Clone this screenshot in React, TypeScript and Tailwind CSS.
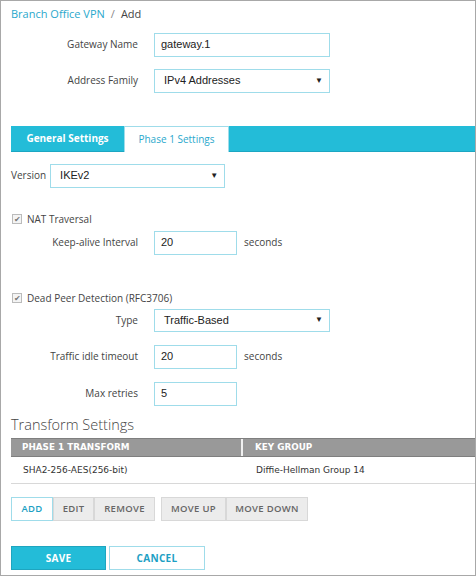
import React from 'react';

const cyan = '#23bcd8';

function Caret() {
  return <span className="text-[8px] text-[#222]">▼</span>;
}

function Field({ label, children }: { label: string; children: React.ReactNode }) {
  return (
    <div className="flex items-center">
      <div className="w-[127px] pr-0 text-right text-[10px] text-[#444]">{label}</div>
      <div className="ml-[16px] flex items-center">{children}</div>
    </div>
  );
}

function TextBox({ value, w }: { value: string; w: string }) {
  return (
    <div className={`${w} h-[24px] border border-[#9fdcea] px-[6px] flex items-center text-[11px] text-[#222] font-['Liberation_Sans',sans-serif]`}>
      {value}
    </div>
  );
}

function SelectBox({ value, w, h = 'h-[24px]' }: { value: string; w: string; h?: string }) {
  return (
    <div className={`${w} ${h} border border-[#9fdcea] pl-[9px] pr-[6px] flex items-center justify-between text-[11px] text-[#222] font-['Liberation_Sans',sans-serif]`}>
      <span>{value}</span>
      <Caret />
    </div>
  );
}

function Check({ label }: { label: string }) {
  return (
    <div className="flex items-center gap-[5px] text-[10px] text-[#444]">
      <span className="w-[10px] h-[10px] border border-[#bbb] bg-[#f4f4f4] flex items-center justify-center text-[8px] leading-none text-[#777]">✔</span>
      <span>{label}</span>
    </div>
  );
}

export default function App() {
  return (
    <div className="w-[476px] h-[576px] border border-[#a8a8a8] bg-white font-['Open_Sans',sans-serif] overflow-hidden">
      {/* Breadcrumb */}
      <div className="pl-[10px] pt-[5px] text-[11px]">
        <span className="text-[#2aa8cc]">Branch Office VPN</span>
        <span className="text-[#888] mx-[6px]">/</span>
        <span className="text-[#444]">Add</span>
      </div>

      <div className="mt-[10px] flex flex-col gap-[12px] pl-[10px]">
        <Field label="Gateway Name">
          <TextBox value="gateway.1" w="w-[176px]" />
        </Field>
        <Field label="Address Family">
          <SelectBox value="IPv4 Addresses" w="w-[176px]" />
        </Field>
      </div>

      {/* Tabs */}
      <div className="mt-[33px] ml-[10px] h-[26px] bg-[#23bcd8] flex items-stretch border-b border-[#1ca6c2]">
        <div className="w-[113px] flex items-center justify-center text-[10px] font-bold text-white">General Settings</div>
        <div className="w-[105px] -mb-[1px] bg-white border-t border-l border-r border-[#9fdcea] flex items-center justify-center text-[10px] text-[#2aa8cc]">Phase 1 Settings</div>
      </div>

      <div className="mt-[12px] pl-[10px] flex items-center gap-[4px]">
        <span className="text-[10px] text-[#444]">Version</span>
        <SelectBox value="IKEv2" w="w-[175px]" />
      </div>

      <div className="mt-[24px] pl-[11px]">
        <Check label="NAT Traversal" />
      </div>
      <div className="mt-[4px] pl-[10px]">
        <Field label="Keep-alive Interval">
          <TextBox value="20" w="w-[83px]" />
          <span className="ml-[7px] text-[10px] text-[#444]">seconds</span>
        </Field>
      </div>

      <div className="mt-[36px] pl-[11px]">
        <Check label="Dead Peer Detection (RFC3706)" />
      </div>
      <div className="mt-[3px] pl-[10px] flex flex-col gap-[13px]">
        <Field label="Type">
          <SelectBox value="Traffic-Based" w="w-[176px]" h="h-[23px]" />
        </Field>
        <Field label="Traffic idle timeout">
          <TextBox value="20" w="w-[83px]" />
          <span className="ml-[7px] text-[10px] text-[#444]">seconds</span>
        </Field>
        <Field label="Max retries">
          <TextBox value="5" w="w-[83px]" />
        </Field>
      </div>

      {/* Transform settings */}
      <div className="mt-[8px] pl-[10px] text-[14.5px] text-[#444] font-light">Transform Settings</div>
      <div className="ml-[10px] mt-[3px]">
        <div className="flex h-[19px] bg-[#999] border-y border-[#7f7f7f] text-[8.8px] font-bold text-white font-['DejaVu_Sans',sans-serif]">
          <div className="w-[232px] border-r-2 border-[#f0f0f0] flex items-center pl-[11px]">PHASE 1 TRANSFORM</div>
          <div className="flex-1 flex items-center pl-[12px]">KEY GROUP</div>
        </div>
        <div className="flex h-[27px] border-b border-[#d8d8d8] text-[9px] text-[#333] font-['DejaVu_Sans',sans-serif]">
          <div className="w-[234px] flex items-center pl-[12px]">SHA2-256-AES(256-bit)</div>
          <div className="flex-1 flex items-center pl-[11px]">Diffie-Hellman Group 14</div>
        </div>
      </div>

      <div className="mt-[13px] ml-[10px] flex items-center text-[9.5px] font-semibold tracking-[0.3px]">
        <div className="w-[42px] h-[24px] border border-[#9fdcea] bg-white text-[#1d9fc4] flex items-center justify-center">ADD</div>
        <div className="w-[41px] h-[24px] border border-[#d8d8d8] bg-[#ececec] text-[#666] flex items-center justify-center">EDIT</div>
        <div className="w-[61px] h-[24px] border border-[#d8d8d8] bg-[#ececec] text-[#666] flex items-center justify-center">REMOVE</div>
        <div className="ml-[6px] w-[65px] h-[24px] border border-[#d8d8d8] bg-[#ececec] text-[#666] flex items-center justify-center">MOVE UP</div>
        <div className="w-[82px] h-[24px] border border-[#d8d8d8] bg-[#ececec] text-[#666] flex items-center justify-center">MOVE DOWN</div>
      </div>

      <div className="mt-[25px] ml-[10px] flex items-center gap-[3px] text-[10px] font-bold tracking-[0.3px]">
        <div className="w-[95px] h-[24px] border border-[#1ea5bf] text-white flex items-center justify-center" style={{ backgroundColor: cyan }}>SAVE</div>
        <div className="w-[96px] h-[24px] bg-white border border-[#9fdcea] text-[#1d9fc4] flex items-center justify-center">CANCEL</div>
      </div>
    </div>
  );
}
